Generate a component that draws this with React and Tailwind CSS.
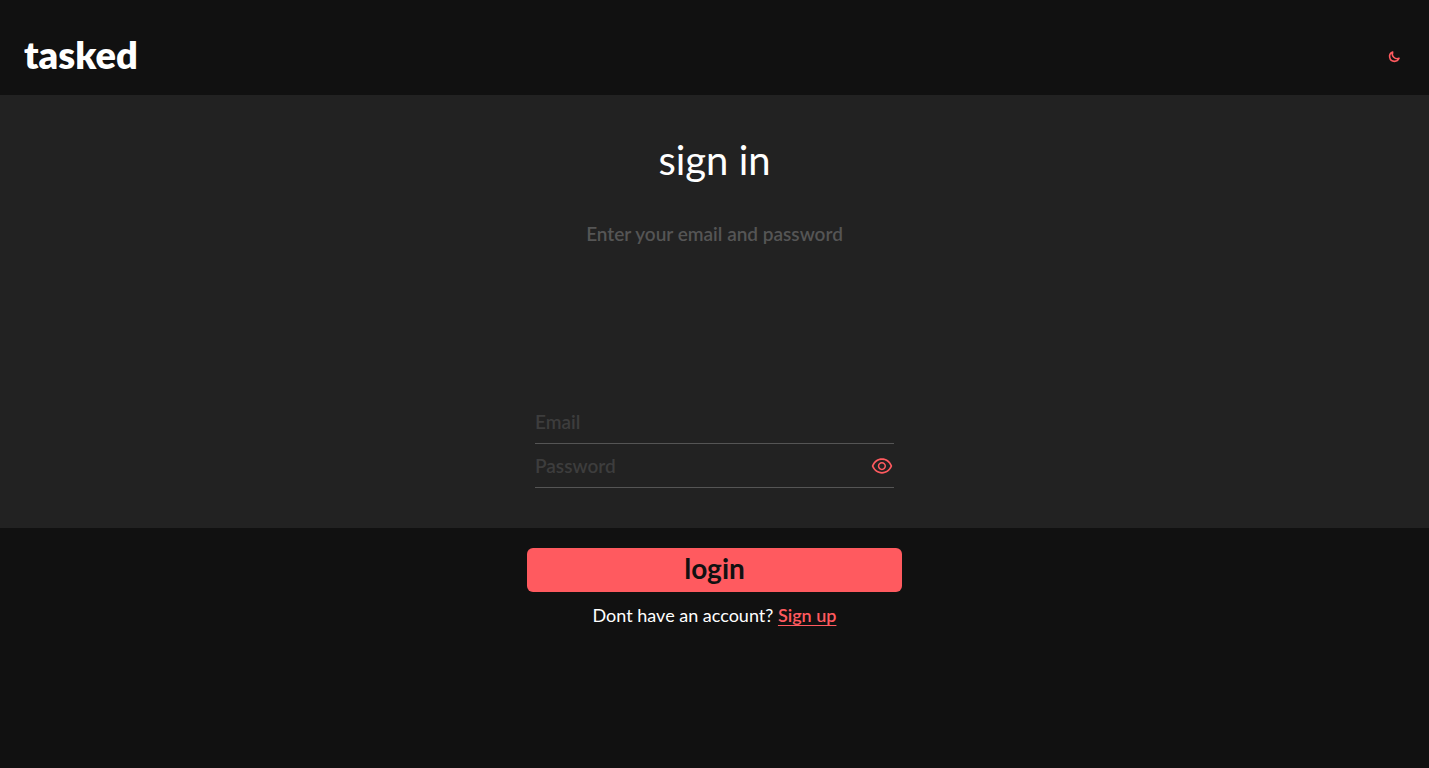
import { useState } from "react";
import { AiOutlineEye } from "react-icons/ai";

function MoonIcon({ className }) {
  return (
    <svg
      viewBox="0 0 24 24"
      fill="none"
      stroke="currentColor"
      strokeWidth="3"
      strokeLinecap="round"
      strokeLinejoin="round"
      className={className}
      aria-hidden="true"
    >
      <path d="M20.354 15.354A9 9 0 018.646 3.646 9.003 9.003 0 0012 21a9.003 9.003 0 008.354-5.646z" />
    </svg>
  );
}

export default function App() {
  const [visible, setVisible] = useState(false);
  return (
    <div className="min-h-screen bg-[#111111] font-['Lato',sans-serif] text-lg text-white">
      <header className="flex h-[95px] items-center justify-between px-6 pt-[18px]">
        <h1 className="pb-1.5 text-[38px] leading-10 font-extrabold">tasked</h1>
        <button type="button" aria-label="Toggle theme" className="p-1 text-[#ff5a5f]">
          <MoonIcon className="size-[13px]" />
        </button>
      </header>
      <form onSubmit={(e) => e.preventDefault()}>
        <div className="flex flex-col items-center bg-[#222222] px-4 pt-[35px] pb-10">
          <h2 className="text-[40px] leading-[60px]">sign in</h2>
          <p className="mt-8 text-[19px] leading-6 font-semibold text-[#555555]">Enter your email and password</p>
          <div className="mt-[154px] flex w-full max-w-[359px] flex-col">
            <div className="flex h-11 items-center border-b border-[#555555]">
              <input
                type="email"
                aria-label="Email"
                placeholder="Email"
                className="w-full bg-transparent text-[19px] leading-7 font-semibold outline-none placeholder:text-[#3d3d3d]"
              />
            </div>
            <div className="flex h-11 items-center border-b border-[#555555]">
              <input
                type={visible ? "text" : "password"}
                aria-label="Password"
                placeholder="Password"
                className="w-full min-w-0 bg-transparent text-[19px] leading-7 font-semibold outline-none placeholder:text-[#3d3d3d]"
              />
              <button
                type="button"
                aria-label="Show password"
                onClick={() => setVisible(!visible)}
                className="text-[#ff5a5f]"
              >
                <AiOutlineEye className="size-6" />
              </button>
            </div>
          </div>
        </div>
        <div className="flex flex-col items-center px-4 pt-5">
          <button
            type="submit"
            className="h-11 w-full max-w-[375px] rounded-md bg-[#ff5a5f] pb-1 text-[28px] leading-10 font-bold text-[#111111]"
          >
            login
          </button>
          <p className="mt-[11px] leading-6">
            Dont have an account?{" "}
            <a
              href="#signup"
              className="font-semibold text-[#ff5a5f] underline decoration-1 underline-offset-3 [text-decoration-skip-ink:none]"
            >
              Sign up
            </a>
          </p>
        </div>
      </form>
    </div>
  );
}
